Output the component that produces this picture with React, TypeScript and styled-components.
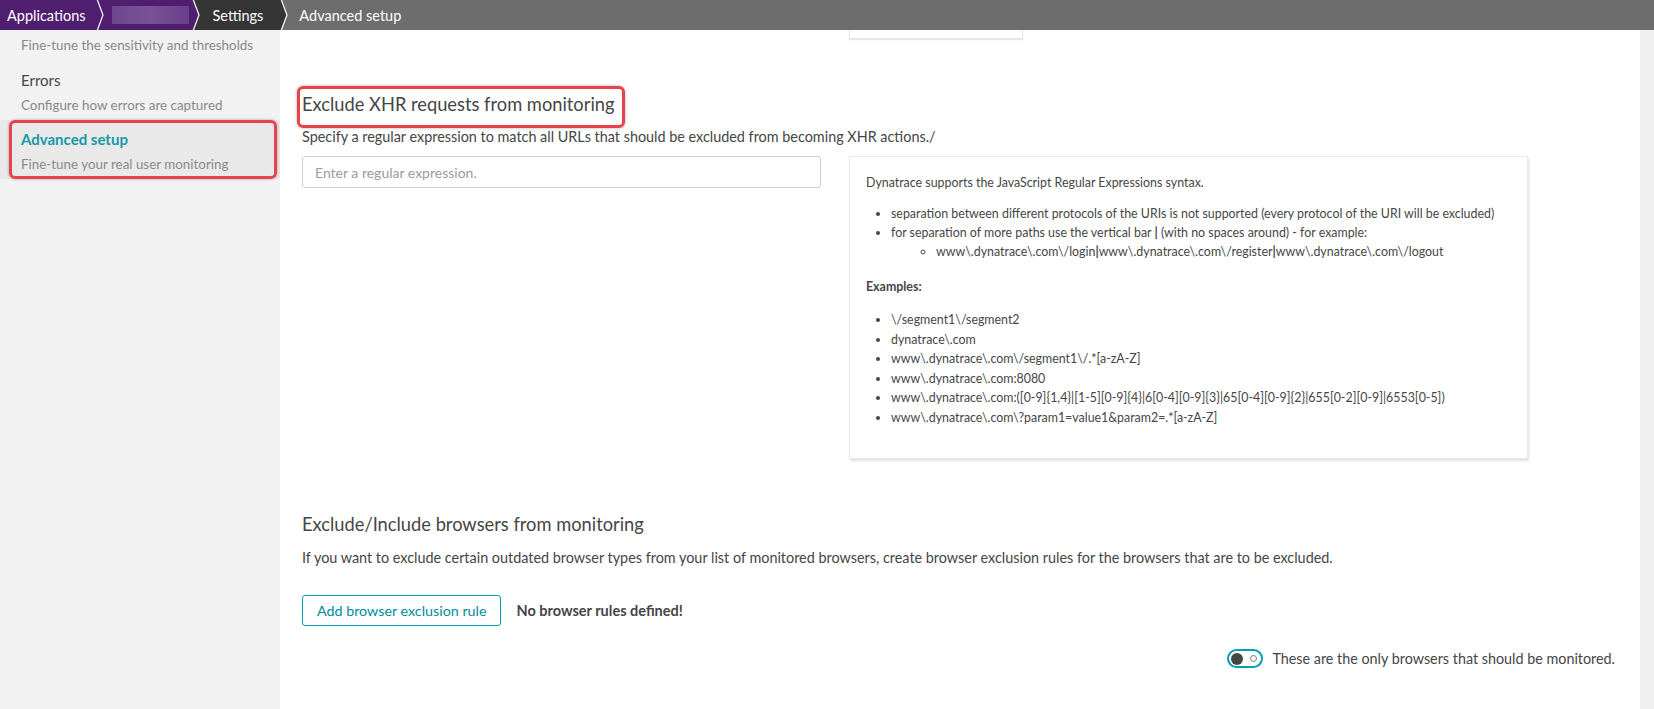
import React from 'react';
import styled, {createGlobalStyle} from 'styled-components';

const GlobalStyle = createGlobalStyle`
  html, body {
    margin: 0;
    padding: 0;
    background: #fff;
  }

  body {
    font-family: Lato, "Open Sans", sans-serif;
    color: #454646;
  }
`;

const PURPLE = '#4f1e6e';
const DARK = '#353535';
const GRAY = '#6d6d6d';
const TEAL = '#00a1b2';
const RED = '#e8434b';

const Page = styled.div`
  display: flex;
  flex-direction: column;
  width: 1654px;
  height: 709px;
  overflow: hidden;
`;

const TopBar = styled.div`
  display: flex;
  height: 30px;
  background: ${GRAY};
  flex-shrink: 0;
`;

const Crumb = styled.div<{bg: string; padLeft: number; padRight: number}>`
  display: flex;
  align-items: center;
  height: 30px;
  background: ${props => props.bg};
  color: #fff;
  font-size: 14.5px;
  padding-left: ${props => props.padLeft}px;
  padding-right: ${props => props.padRight}px;
  white-space: nowrap;
`;

const Blurred = styled.div`
  width: 77px;
  height: 18px;
  background: linear-gradient(90deg, #6d4690, #7b5299 50%, #693f8a);
  filter: blur(0.6px);
`;

const Body = styled.div`
  display: flex;
  flex: 1;
  min-height: 0;
`;

const Sidebar = styled.div`
  width: 280px;
  flex-shrink: 0;
  background: #f2f2f2;
`;

const SideItem = styled.div<{active?: boolean; clipped?: boolean}>`
  position: relative;
  padding: ${props => (props.clipped ? '6px 21px 7px' : '9px 21px 6px')};
  background: ${props => (props.active ? '#e9e9e9' : 'transparent')};

  ${props =>
    props.active &&
    `
    &::after {
      content: '';
      position: absolute;
      left: 9px;
      right: 3px;
      top: 0;
      bottom: 0;
      border: 3px solid ${RED};
      border-radius: 6px;
      box-shadow: 0 0 3px rgba(0, 0, 0, 0.35);
    }
  `}
`;

const SideTitle = styled.div<{active?: boolean}>`
  font-size: 15px;
  line-height: 20px;
  color: ${props => (props.active ? '#1798a8' : '#454646')};
  font-weight: ${props => (props.active ? 700 : 400)};
  margin-bottom: 6px;
`;

const SideDesc = styled.div`
  font-size: 13.4px;
  line-height: 18px;
  color: #898989;
`;

const Main = styled.div`
  flex: 1;
  padding: 0 25px 0 22px;
  display: flex;
  flex-direction: column;
`;

const Columns = styled.div`
  display: grid;
  grid-template-columns: 519px 679px;
  column-gap: 28px;
  align-items: start;
`;

const TopCardStub = styled.div`
  grid-column: 2;
  width: 172px;
  height: 8px;
  border: 1px solid #e6e6e6;
  border-top: none;
  box-shadow: 0 1px 1px rgba(0, 0, 0, 0.1);
`;

const SectionTitle = styled.h2<{marked?: boolean}>`
  position: relative;
  align-self: flex-start;
  margin: 0;
  font-size: 18.3px;
  line-height: 24px;
  font-weight: 400;
  color: #454646;

  ${props =>
    props.marked &&
    `
    &::after {
      content: '';
      position: absolute;
      left: -5px;
      right: -11px;
      top: -6px;
      bottom: -12px;
      border: 3px solid ${RED};
      border-radius: 6px;
      box-shadow: 0 0 3px rgba(0, 0, 0, 0.35);
    }
  `}
`;

const Lead = styled.p<{size: number}>`
  margin: 0;
  font-size: ${props => props.size}px;
  line-height: 20px;
  color: #454646;
  white-space: nowrap;
`;

const RegexInput = styled.input`
  box-sizing: border-box;
  width: 100%;
  height: 32px;
  border: 1px solid #cfcfcf;
  border-radius: 3px;
  padding: 0 12px;
  font-family: inherit;
  font-size: 14px;
  color: #454646;

  &::placeholder {
    color: #9b9b9b;
  }
`;

const InfoBox = styled.div`
  box-sizing: border-box;
  height: 303px;
  border: 1px solid #e8e8e8;
  box-shadow: 1px 2px 2px rgba(0, 0, 0, 0.12);
  padding: 16px;
  font-size: 12.4px;
  line-height: 19px;
  color: #454646;
`;

const InfoText = styled.p<{bold?: boolean}>`
  margin: 0;
  font-weight: ${props => (props.bold ? 700 : 400)};
`;

const InfoList = styled.ul<{gapTop: number}>`
  margin: ${props => props.gapTop}px 0 0;
  padding-left: 25px;
  list-style: disc;

  ul {
    margin: 0;
    padding-left: 45px;
    list-style: circle;
  }

  li {
    line-height: 19px;
  }
`;

const ExampleList = styled(InfoList)`
  li {
    line-height: 19.6px;
  }
`;

const Bar = styled.b`
  font-weight: 700;
`;

const ButtonRow = styled.div`
  display: flex;
  align-items: center;
  gap: 15px;
  margin-top: 27px;
`;

const OutlineButton = styled.button`
  height: 31px;
  padding: 0 14px;
  background: #fff;
  border: 1px solid ${TEAL};
  border-radius: 3px;
  color: #008d9c;
  font-family: inherit;
  font-size: 14.3px;
`;

const Strong = styled.span`
  font-size: 14.5px;
  font-weight: 700;
  color: #454646;
`;

const ToggleRow = styled.div`
  display: flex;
  align-items: center;
  justify-content: flex-end;
  gap: 9px;
  margin-top: 23px;
  font-size: 14.35px;
  color: #454646;
`;

const Toggle = styled.div`
  box-sizing: border-box;
  display: flex;
  align-items: center;
  justify-content: space-between;
  width: 36px;
  height: 19px;
  padding: 0 4px 0 2px;
  border: 2px solid ${TEAL};
  border-radius: 10px;
`;

const Knob = styled.span`
  width: 12px;
  height: 12px;
  border-radius: 50%;
  background: #454646;
`;

const OffMark = styled.span`
  box-sizing: border-box;
  width: 7px;
  height: 7px;
  border-radius: 50%;
  border: 1px solid #7a7a7a;
`;

const Scrollbar = styled.div`
  width: 14px;
  flex-shrink: 0;
  background: #f0f0f0;
`;

function Chevron({from, to}: {from: string; to: string}) {
  return (
    <svg width="10" height="30" viewBox="0 0 10 30" style={{display: 'block', flexShrink: 0}}>
      <rect width="10" height="30" fill={to} />
      <polygon points="0,0 2,0 8,15 2,30 0,30" fill={from} />
      <polyline points="2,-1 8,15 2,31" fill="none" stroke="#fff" strokeWidth="1.2" />
    </svg>
  );
}

const examples = [
  '\\/segment1\\/segment2',
  'dynatrace\\.com',
  'www\\.dynatrace\\.com\\/segment1\\/.*[a-zA-Z]',
  'www\\.dynatrace\\.com:8080',
  'www\\.dynatrace\\.com:([0-9]{1,4}|[1-5][0-9]{4}|6[0-4][0-9]{3}|65[0-4][0-9]{2}|655[0-2][0-9]|6553[0-5])',
  'www\\.dynatrace\\.com\\?param1=value1&param2=.*[a-zA-Z]',
];

export default function App() {
  return (
    <Page>
      <GlobalStyle />
      <TopBar>
        <Crumb bg={PURPLE} padLeft={7} padRight={9}>
          Applications
        </Crumb>
        <Chevron from={PURPLE} to={PURPLE} />
        <Crumb bg={PURPLE} padLeft={7} padRight={2}>
          <Blurred />
        </Crumb>
        <Chevron from={PURPLE} to={DARK} />
        <Crumb bg={DARK} padLeft={12} padRight={16}>
          Settings
        </Crumb>
        <Chevron from={DARK} to={GRAY} />
        <Crumb bg={GRAY} padLeft={10} padRight={10}>
          Advanced setup
        </Crumb>
      </TopBar>
      <Body>
        <Sidebar>
          <SideItem clipped>
            <SideDesc>Fine-tune the sensitivity and thresholds</SideDesc>
          </SideItem>
          <SideItem>
            <SideTitle>Errors</SideTitle>
            <SideDesc>Configure how errors are captured</SideDesc>
          </SideItem>
          <SideItem active>
            <SideTitle active>Advanced setup</SideTitle>
            <SideDesc>Fine-tune your real user monitoring</SideDesc>
          </SideItem>
        </Sidebar>
        <Main>
          <Columns>
            <TopCardStub />
          </Columns>
          <SectionTitle marked style={{marginTop: 53}}>
            Exclude XHR requests from monitoring
          </SectionTitle>
          <Lead size={14.4} style={{marginTop: 11}}>
            Specify a regular expression to match all URLs that should be excluded from becoming XHR actions./
          </Lead>
          <Columns style={{marginTop: 9}}>
            <RegexInput placeholder="Enter a regular expression." />
            <InfoBox>
              <InfoText>Dynatrace supports the JavaScript Regular Expressions syntax.</InfoText>
              <InfoList gapTop={12}>
                <li>
                  separation between different protocols of the URIs is not supported (every protocol of the URI
                  will be excluded)
                </li>
                <li>
                  for separation of more paths use the vertical bar <Bar>|</Bar> (with no spaces around) - for
                  example:
                  <ul>
                    <li>
                      www\.dynatrace\.com\/login<Bar>|</Bar>www\.dynatrace\.com\/register<Bar>|</Bar>
                      www\.dynatrace\.com\/logout
                    </li>
                  </ul>
                </li>
              </InfoList>
              <InfoText bold style={{marginTop: 16}}>
                Examples:
              </InfoText>
              <ExampleList gapTop={14}>
                {examples.map(example => (
                  <li key={example}>{example}</li>
                ))}
              </ExampleList>
            </InfoBox>
          </Columns>
          <SectionTitle style={{marginTop: 53}}>Exclude/Include browsers from monitoring</SectionTitle>
          <Lead size={14.4} style={{marginTop: 12}}>
            If you want to exclude certain outdated browser types from your list of monitored browsers, create
            browser exclusion rules for the browsers that are to be excluded.
          </Lead>
          <ButtonRow>
            <OutlineButton>Add browser exclusion rule</OutlineButton>
            <Strong>No browser rules defined!</Strong>
          </ButtonRow>
          <ToggleRow>
            <Toggle>
              <Knob />
              <OffMark />
            </Toggle>
            These are the only browsers that should be monitored.
          </ToggleRow>
        </Main>
        <Scrollbar />
      </Body>
    </Page>
  );
}
